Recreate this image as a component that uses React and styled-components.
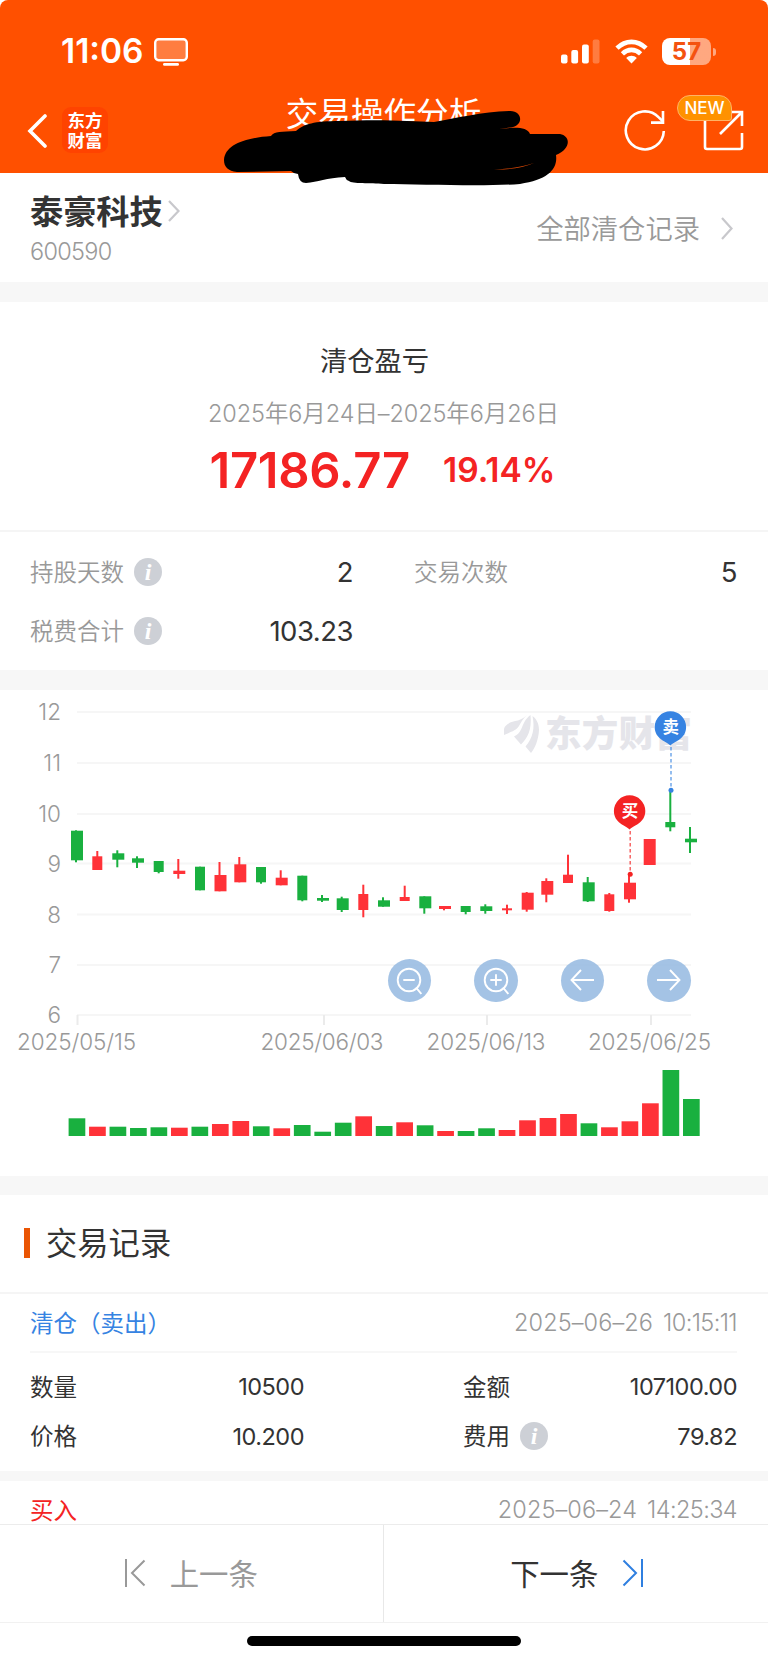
import styled, { createGlobalStyle } from "styled-components";

const GlobalStyle = createGlobalStyle`
  * {
    box-sizing: border-box;
  }

  body {
    margin: 0;
    background: #fff;
    color: #333;
    font-family: Inter, "Noto Sans CJK SC", sans-serif;
    -webkit-font-smoothing: antialiased;
  }
`;

const Page = styled.div`
  position: relative;
  display: flex;
  flex-direction: column;
  width: 768px;
  height: 1663px;
  overflow: hidden;
  background: #fff;
`;

const Header = styled.header`
  height: 173px;
  background: #ff5000;
  border-radius: 8px 8px 0 0;
`;

const StatusBar = styled.div`
  display: flex;
  align-items: center;
  height: 103px;
  padding: 0 52px 0 61px;
`;

const Time = styled.span`
  width: 93px;
  padding-bottom: 1px;
  font-size: 33.5px;
  font-weight: 600;
  color: #fff;
`;

const StatusIcons = styled.div`
  display: flex;
  align-items: center;
  gap: 14.5px;
  margin-left: auto;
`;

const Battery = styled.div`
  display: flex;
  align-items: center;
  gap: 2px;

  &::after {
    content: "";
    width: 3px;
    height: 8px;
    border-radius: 0 4px 4px 0;
    background: rgba(255, 255, 255, 0.5);
  }
`;

const BatteryLevel = styled.span`
  width: 49px;
  height: 27px;
  border-radius: 8px;
  background: linear-gradient(90deg, #fff 57%, rgba(255, 255, 255, 0.5) 57%);
  color: #f4520f;
  font-size: 24px;
  font-weight: 700;
  line-height: 27px;
  text-align: center;
`;

const NavBar = styled.div`
  display: flex;
  align-items: flex-start;
  justify-content: space-between;
  height: 70px;
  padding: 0 24px 0 27px;
`;

const NavLeft = styled.div`
  display: flex;
  gap: 15px;
  width: 228px;
  padding-top: 4px;

  svg {
    margin-top: 7px;
  }
`;

const AppLogo = styled.div`
  width: 46px;
  height: 46px;
  padding-top: 4px;
  border-radius: 9px;
  background: #ff4300;
  color: #fff;
  font-size: 17.5px;
  font-weight: 700;
  line-height: 19.5px;
  text-align: center;
`;

const NavTitle = styled.h1`
  margin: 0;
  padding-top: 1px;
  color: #fff;
  font-size: 32.6px;
  font-weight: 400;
  line-height: 20px;
  white-space: nowrap;
`;

const NavActions = styled.div`
  position: relative;
  display: flex;
  justify-content: flex-end;
  gap: 37px;
  width: 232px;
  padding-top: 6px;
`;

const NewBadge = styled.span`
  position: absolute;
  right: 12px;
  top: -8px;
  width: 55px;
  height: 26px;
  border: 1px solid #ffb366;
  border-radius: 13px 13px 3px 13px;
  background: #ff9200;
  color: #fff;
  font-size: 17px;
  font-weight: 500;
  line-height: 25px;
  text-align: center;
`;

const Scribble = styled.svg`
  position: absolute;
  left: 220px;
  top: 105px;
`;

const Divider = styled.div`
  flex: none;
  height: ${(p) => p.$height}px;
  background: #f7f7f7;
`;

const StockBar = styled.section`
  display: flex;
  justify-content: space-between;
  height: 109px;
  padding: 18px 35px 0 30px;
`;

const StockName = styled.div`
  display: flex;
  align-items: center;
  gap: 5px;
  height: 42px;
  font-size: 33.2px;
  font-weight: 700;
  line-height: 42px;

  svg {
    margin-bottom: 2px;
  }
`;

const StockCode = styled.div`
  color: #999;
  font-size: 23.5px;
  font-weight: 350;
  line-height: 38px;
  letter-spacing: -0.7px;
`;

const AllRecords = styled.a`
  display: flex;
  align-items: center;
  gap: 21px;
  height: 71px;
  color: #999;
  font-size: 27.3px;
  font-weight: 350;

  svg {
    margin-top: 3px;
  }
`;

const Profit = styled.section`
  height: 230px;
  padding: 39px 3px 0 0;
  border-bottom: 2px solid #f5f5f5;
  text-align: center;
`;

const ProfitTitle = styled.h2`
  margin: 0 16px 0 0;
  font-size: 27.3px;
  font-weight: 400;
  line-height: 42px;
`;

const ProfitDates = styled.div`
  height: 59px;
  padding-left: 2px;
  color: #999;
  font-size: 23.5px;
  font-weight: 350;
  line-height: 61px;
  letter-spacing: -0.1px;
`;

const ProfitNumbers = styled.div`
  display: flex;
  align-items: center;
  justify-content: center;
  gap: 33px;
  height: 56px;
  color: #f42323;
  font-weight: 600;
`;

const Amount = styled.strong`
  font-size: 49px;
  font-weight: 600;
  letter-spacing: -0.3px;
`;

const Percent = styled.span`
  font-size: 33.5px;
`;

const Stats = styled.section`
  display: grid;
  grid-template-columns: 323px 323px;
  grid-auto-rows: 59px;
  column-gap: 61px;
  height: 138px;
  padding: 10px 30px 0;
`;

const Field = styled.div`
  display: flex;
  align-items: center;
`;

const FieldLabel = styled.span`
  padding-bottom: ${(p) => (p.$dark ? 2 : 1)}px;
  color: ${(p) => (p.$dark ? "#333" : "#999")};
  font-size: 23.5px;
  font-weight: ${(p) => (p.$dark ? 400 : 350)};
`;

const FieldValue = styled.span`
  margin-left: auto;
  font-size: ${(p) => p.$size}px;
  letter-spacing: -0.5px;
`;

const InfoDot = styled.i`
  display: flex;
  align-items: center;
  justify-content: center;
  width: 28px;
  height: 28px;
  margin-left: 10px;
  border-radius: 50%;
  background: #cdd0d6;
  color: #fff;
  font: italic 700 24px/28px "Liberation Serif", serif;
`;

const ChartSection = styled.section`
  position: relative;
  height: 486px;
`;

const ChartButtons = styled.div`
  position: absolute;
  left: 387.5px;
  top: 268.5px;
  display: flex;
  gap: 43px;
`;

const RoundButton = styled.button`
  display: flex;
  align-items: center;
  justify-content: center;
  width: 43.6px;
  height: 43.6px;
  padding: 0;
  border: 0;
  border-radius: 50%;
  background: rgba(148, 184, 224, 0.85);
`;

const RecordsHead = styled.div`
  display: flex;
  align-items: center;
  gap: 16px;
  height: 99px;
  padding: 0 24px 1px;
  border-bottom: 2px solid #f5f5f5;
  font-size: 31.3px;

  &::before {
    content: "";
    width: 6px;
    height: 30px;
    background: #ea5504;
  }
`;

const Record = styled.article`
  margin: 0 31px 0 30px;
`;

const RecordTop = styled.div`
  display: flex;
  align-items: center;
  justify-content: space-between;
  height: 59px;
  border-bottom: 2px solid #f7f7f7;
  font-size: 23.5px;
`;

const RecordType = styled.span`
  padding-bottom: 2px;
  color: ${(p) => p.$color};
`;

const RecordTime = styled.time`
  display: flex;
  gap: 10px;
  color: #999;
  font-size: 23.5px;
  font-weight: 350;
  letter-spacing: -0.6px;
`;

const RecordDay = styled.span`
  letter-spacing: 0.1px;
`;

const RecordGrid = styled.div`
  display: grid;
  grid-template-columns: 274px 274px;
  grid-auto-rows: 49.5px;
  justify-content: space-between;
  height: 118px;
  padding-top: 9px;
`;

const Footer = styled.footer`
  position: absolute;
  left: 0;
  bottom: 0;
  width: 768px;
  height: 139px;
  border-top: 1px solid #ececec;
  background: #fff;
`;

const FooterNav = styled.nav`
  display: flex;
  height: 98px;
  border-bottom: 1px solid #f1f1f1;
`;

const FooterLink = styled.a`
  display: flex;
  align-items: center;
  justify-content: center;
  gap: 24px;
  flex: 1;
  padding-bottom: 1px;
  color: ${(p) => (p.$muted ? "#999" : "#333")};
  font-size: 29.4px;

  & + & {
    padding-left: 2px;
    border-left: 1px solid #e8e8e8;
  }
`;

const FooterText = styled.span`
  padding-bottom: 3px;
`;

const HomeIndicator = styled.div`
  width: 274px;
  height: 10px;
  margin: 13px auto 0 247px;
  border-radius: 5px;
  background: #000;
`;

const RED = "#ff3238";
const GREEN = "#19b03f";

// [up, x, width, body top, body bottom, wick top, wick bottom]
const CANDLES = [
  [0, 71, 12, 140.7, 170.3, 140.3, 172.3],
  [1, 92.3, 10, 166.3, 180, 161, 180],
  [0, 112.3, 12, 163.3, 169.7, 160.3, 177.3],
  [0, 132, 12, 168.3, 172.7, 166.3, 178],
  [0, 153.7, 10, 171, 182, 171, 183.3],
  [1, 173.3, 12, 180.7, 184, 169, 188.7],
  [0, 195, 10, 176.7, 200.3, 176.7, 200.3],
  [1, 214.5, 12, 185, 201.3, 172, 201.3],
  [1, 234.3, 12, 174.3, 192.3, 167, 192.3],
  [0, 256, 10, 177, 192.3, 177, 193.7],
  [1, 275.7, 12, 187.7, 195.3, 180.3, 195.3],
  [0, 297.3, 10, 185.7, 210.3, 185.7, 211.3],
  [0, 317, 12, 208, 210.7, 205, 212],
  [0, 336.7, 12, 208.3, 220, 206.7, 222],
  [1, 358.3, 10, 204, 220, 194.7, 227.3],
  [0, 378, 12, 210.3, 216.7, 207.3, 216.7],
  [1, 399.7, 10, 207, 211, 195.7, 211],
  [0, 419.3, 12, 206.3, 218.3, 206.3, 223.7],
  [1, 439, 12, 216, 219, 216, 220.3],
  [0, 460.7, 10, 216, 222, 216, 224.3],
  [0, 480.3, 12, 216.3, 221, 214.3, 223.7],
  [1, 502, 10, 218.3, 220.3, 214.7, 224],
  [1, 521.7, 12, 202.7, 219.7, 202, 221.7],
  [1, 541.3, 12, 191, 204.7, 188.3, 212.3],
  [1, 563, 10, 184.7, 193, 164.7, 193],
  [0, 582.7, 12, 192.3, 211.3, 187, 212],
  [1, 604.3, 10, 204.3, 221, 203, 221.7],
  [1, 624, 12, 192.7, 209.3, 185, 212.7],
  [1, 643.7, 12, 149, 175, 149, 175],
  [0, 665.3, 10, 132, 137.3, 101.7, 141.3],
  [0, 685, 12, 148.7, 152.3, 137, 163],
];

const VOLUMES = [
  17.7, 9.3, 9.3, 8, 8.7, 8.3, 9.3, 12, 15, 9.7, 7.7, 11, 4.3, 13.3, 19.7, 10,
  13.7, 10.7, 5, 5, 7.7, 6, 15.7, 18, 22, 12.7, 8.7, 14.7, 32.7, 66, 37,
];

const PRICE_LINES = [
  [12, 22], [11, 73], [10, 124], [9, 173.5], [8, 224.5], [7, 275], [6, 325],
];

const DATES = [
  ["2025/05/15", 77.5, 76.5, 119],
  ["2025/06/03", 324, 322, 123],
  ["2025/06/13", 487, 486, 119],
  ["2025/06/25", 651, 649.5, 123],
];

function Chevron({ width = 12, height = 22, color = "#c8c8cc", stroke = 2.2 }) {
  return (
    <svg width={width} height={height} viewBox={`0 0 ${width} ${height}`} fill="none">
      <path d={`M1 1L${width - 1.5} ${height / 2}L1 ${height - 1}`} stroke={color} strokeWidth={stroke} />
    </svg>
  );
}

function Pin({ x, y, end, color, label }) {
  return (
    <g>
      <line x1={x + 0.6} y1={y + 20} x2={x + 0.6} y2={end} stroke={color} strokeWidth="1.4" strokeDasharray="3.5 2.5" opacity="0.75" />
      <circle cx={x + 0.6} cy={end} r="2.5" fill={color} />
      <path
        d={`M${x} ${y + 18.5}C${x - 4} ${y + 14.5} ${x - 15.7} ${y + 12} ${x - 15.7} ${y}A15.7 15.7 0 0 1 ${x + 15.7} ${y}C${x + 15.7} ${y + 12} ${x + 4} ${y + 14.5} ${x} ${y + 18.5}Z`}
        fill={color}
      />
      <text x={x + 0.4} y={y + 6.2} fill="#fff" fontSize="16.5" fontWeight="700" textAnchor="middle">{label}</text>
    </g>
  );
}

function Chart() {
  return (
    <svg width="768" height="486" viewBox="0 0 768 486">
      {PRICE_LINES.map(([price, y]) => (
        <g key={price}>
          <line x1="77" x2="691" y1={y} y2={y} stroke="#f6f6f6" strokeWidth="2" />
          <text x="61" y={y + 8.4} fill="#999" fontSize="22.5" fontWeight="350" textAnchor="end">{price}</text>
        </g>
      ))}
      <g fill="#e5e5ea">
        <path d="M504 45V39C505 34 511 31.5 518 30.5C522 29 525 27 527 25C523 29 521 32 519 36C516 41 510 42 504 45Z" />
        <path d="M530.5 25C525 29 523.5 34 521.5 38.5C519.5 43 517 45 514 46.5L521 54.5C527.5 48 532 40 530.5 25Z" />
        <path d="M532.5 26C538 30 539 36 539 40C538.5 50 535 58 531 63L525.5 56.5C533 48 535 38 532.5 26Z" />
        <text x="545" y="57" fontSize="36.5" fontWeight="900" textLength="147">东方财富</text>
      </g>
      {CANDLES.map(([up, x, w, top, bottom, high, low]) => (
        <g key={x} fill={up ? RED : GREEN}>
          <rect x={x + 4} y={high} width="2" height={low - high} />
          <rect x={x} y={top} width={w} height={bottom - top} />
        </g>
      ))}
      <Pin x={670.4} y={37} end={100.3} color="#3683e2" label="卖" />
      <Pin x={629.6} y={121} end={184.3} color="#f42323" label="买" />
      {DATES.map(([date, tick, x, length]) => (
        <g key={date}>
          <line x1={tick} x2={tick} y1="325" y2="335" stroke="#ebebeb" strokeWidth="2" />
          <text x={x} y="360.3" fill="#999" fontSize="22.5" fontWeight="350" textAnchor="middle" textLength={length}>{date}</text>
        </g>
      ))}
      {VOLUMES.map((v, i) => (
        <rect key={i} x={68.6 + i * 20.48} y={446 - v} width="16.7" height={v} fill={CANDLES[i][0] ? RED : GREEN} />
      ))}
    </svg>
  );
}

function ZoomIcon({ plus }) {
  return (
    <svg width="26" height="30" viewBox="0 0 26 30" fill="none" stroke="#fff" strokeWidth="1.9">
      <circle cx="13" cy="15" r="11.3" />
      <path d="M7.3 15H18.7M20 22.5L25.3 29" />
      {plus && <path d="M13 9.3V20.7" />}
    </svg>
  );
}

function ArrowIcon({ right }) {
  return (
    <svg width="24" height="22" viewBox="0 0 24 22" fill="none" stroke="#fff" strokeWidth="1.9">
      <path d={right ? "M0 11H22.5M13 1L22.5 11L13 21" : "M24 11H1.5M11 1L1.5 11L11 21"} />
    </svg>
  );
}

function App() {
  return (
    <>
      <GlobalStyle />
      <Page>
        <Header>
          <StatusBar>
            <Time>11:06</Time>
            <svg width="34" height="28" viewBox="0 0 34 28">
              <rect x="1.2" y="1.2" width="31.6" height="21" rx="3.5" fill="#ff7d40" stroke="#fff" strokeWidth="2.4" />
              <rect x="9" y="25" width="16" height="2.8" rx="1.4" fill="#fff" />
            </svg>
            <StatusIcons>
              <svg width="39" height="25" viewBox="0 0 39 25" fill="#fff">
                <rect x="0" y="15.5" width="6.5" height="9" rx="2" />
                <rect x="10.3" y="11" width="6.8" height="13.5" rx="2" />
                <rect x="21" y="5.5" width="6.8" height="19" rx="2" />
                <rect x="31.7" y="0.5" width="6.8" height="24" rx="2" opacity="0.25" />
              </svg>
              <svg width="33" height="25" viewBox="0 0 33 25" fill="none" stroke="#fff" strokeWidth="4.6">
                <path d="M2 9.2C10.5 0.7 22.5 0.7 31 9.2" />
                <path d="M7.4 14.8C12.8 9.6 20.2 9.6 25.6 14.8" />
                <path d="M11.2 19C14.2 16.1 18.8 16.1 21.8 19L16.5 24.5Z" fill="#fff" stroke="none" />
              </svg>
              <Battery>
                <BatteryLevel>57</BatteryLevel>
              </Battery>
            </StatusIcons>
          </StatusBar>
          <NavBar>
            <NavLeft>
              <svg width="20" height="34" viewBox="0 0 20 34" fill="none">
                <path d="M18 2L3 17L18 32" stroke="#fff" strokeWidth="3.6" strokeLinecap="round" />
              </svg>
              <AppLogo>东方<br />财富</AppLogo>
            </NavLeft>
            <NavTitle>交易操作分析</NavTitle>
            <NavActions>
              <svg width="42" height="42" viewBox="0 0 42 42" fill="none" stroke="#fff" strokeWidth="2.6">
                <path d="M39.8 22A19 19 0 1 1 34.5 8.2L39 12.5" />
                <path d="M39 2V13.6H27" />
              </svg>
              <svg width="41" height="42" viewBox="0 0 41 42" fill="none" stroke="#fff" strokeWidth="2.6">
                <path d="M2 2V38Q2 40 4 40H37Q39 40 39 38V24" />
                <path d="M27 3H39V17M38.5 3.5L17 25" />
              </svg>
              <NewBadge>NEW</NewBadge>
            </NavActions>
          </NavBar>
        </Header>

        <StockBar>
          <div>
            <StockName>
              泰豪科技
              <Chevron />
            </StockName>
            <StockCode>600590</StockCode>
          </div>
          <AllRecords>
            全部清仓记录
            <Chevron height={23} />
          </AllRecords>
        </StockBar>
        <Divider $height={20} />

        <Profit>
          <ProfitTitle>清仓盈亏</ProfitTitle>
          <ProfitDates>2025年6月24日–2025年6月26日</ProfitDates>
          <ProfitNumbers>
            <Amount>17186.77</Amount>
            <Percent>19.14%</Percent>
          </ProfitNumbers>
        </Profit>

        <Stats>
          <Field>
            <FieldLabel>持股天数</FieldLabel>
            <InfoDot>i</InfoDot>
            <FieldValue $size={27.5}>2</FieldValue>
          </Field>
          <Field>
            <FieldLabel>交易次数</FieldLabel>
            <FieldValue $size={27.5}>5</FieldValue>
          </Field>
          <Field>
            <FieldLabel>税费合计</FieldLabel>
            <InfoDot>i</InfoDot>
            <FieldValue $size={27.5}>103.23</FieldValue>
          </Field>
        </Stats>
        <Divider $height={20} />

        <ChartSection>
          <Chart />
          <ChartButtons>
            <RoundButton><ZoomIcon /></RoundButton>
            <RoundButton><ZoomIcon plus /></RoundButton>
            <RoundButton><ArrowIcon /></RoundButton>
            <RoundButton><ArrowIcon right /></RoundButton>
          </ChartButtons>
        </ChartSection>
        <Divider $height={19} />

        <RecordsHead>
          <FooterText>交易记录</FooterText>
        </RecordsHead>
        <Record>
          <RecordTop>
            <RecordType $color="#3683e2">清仓（卖出）</RecordType>
            <RecordTime>
              <RecordDay>2025–06–26</RecordDay>
              <span>10:15:11</span>
            </RecordTime>
          </RecordTop>
          <RecordGrid>
            <Field>
              <FieldLabel $dark>数量</FieldLabel>
              <FieldValue $size={23.5}>10500</FieldValue>
            </Field>
            <Field>
              <FieldLabel $dark>金额</FieldLabel>
              <FieldValue $size={23.5}>107100.00</FieldValue>
            </Field>
            <Field>
              <FieldLabel $dark>价格</FieldLabel>
              <FieldValue $size={23.5}>10.200</FieldValue>
            </Field>
            <Field>
              <FieldLabel $dark>费用</FieldLabel>
              <InfoDot>i</InfoDot>
              <FieldValue $size={23.5}>79.82</FieldValue>
            </Field>
          </RecordGrid>
        </Record>
        <Divider $height={10} />
        <Record>
          <RecordTop>
            <RecordType $color="#f42323">买入</RecordType>
            <RecordTime>
              <RecordDay>2025–06–24</RecordDay>
              <span>14:25:34</span>
            </RecordTime>
          </RecordTop>
        </Record>

        <Footer>
          <FooterNav>
            <FooterLink $muted>
              <svg width="21" height="28" viewBox="0 0 21 28" fill="none" stroke="#999" strokeWidth="2">
                <path d="M1 0V28M19.5 1.5L7 14L19.5 26.5" />
              </svg>
              <FooterText>上一条</FooterText>
            </FooterLink>
            <FooterLink>
              <FooterText>下一条</FooterText>
              <svg width="21" height="28" viewBox="0 0 21 28" fill="none" stroke="#2f7fe0" strokeWidth="2">
                <path d="M20 0V28M1.5 1.5L14 14L1.5 26.5" />
              </svg>
            </FooterLink>
          </FooterNav>
          <HomeIndicator />
        </Footer>

        <Scribble width="352" height="84" viewBox="220 105 352 84">
          <path d="M224 160C225 145 244 138 271 136C274 131 282 132 296 131C304 124 314 121 340 121C380 119 410 121 434 122C456 118 482 112 509 111C522 110 524 124 513 127L499 129C516 127 527 127 530 134H560C571 136 571 149 556 155C558 169 548 180 520 184C480 187 420 184 384 184C370 183 352 184 349 181Q346 180 345 177C326 178 318 182 306 183Q299 183 298 174Q294 174 291 171L237 172C228 171 224 167 224 160Z" />
          <path d="M494 169.5Q518 168.5 534 163Q518 170 494 169.5Z" fill="#e24a04" />
        </Scribble>
      </Page>
    </>
  );
}

export default App;
